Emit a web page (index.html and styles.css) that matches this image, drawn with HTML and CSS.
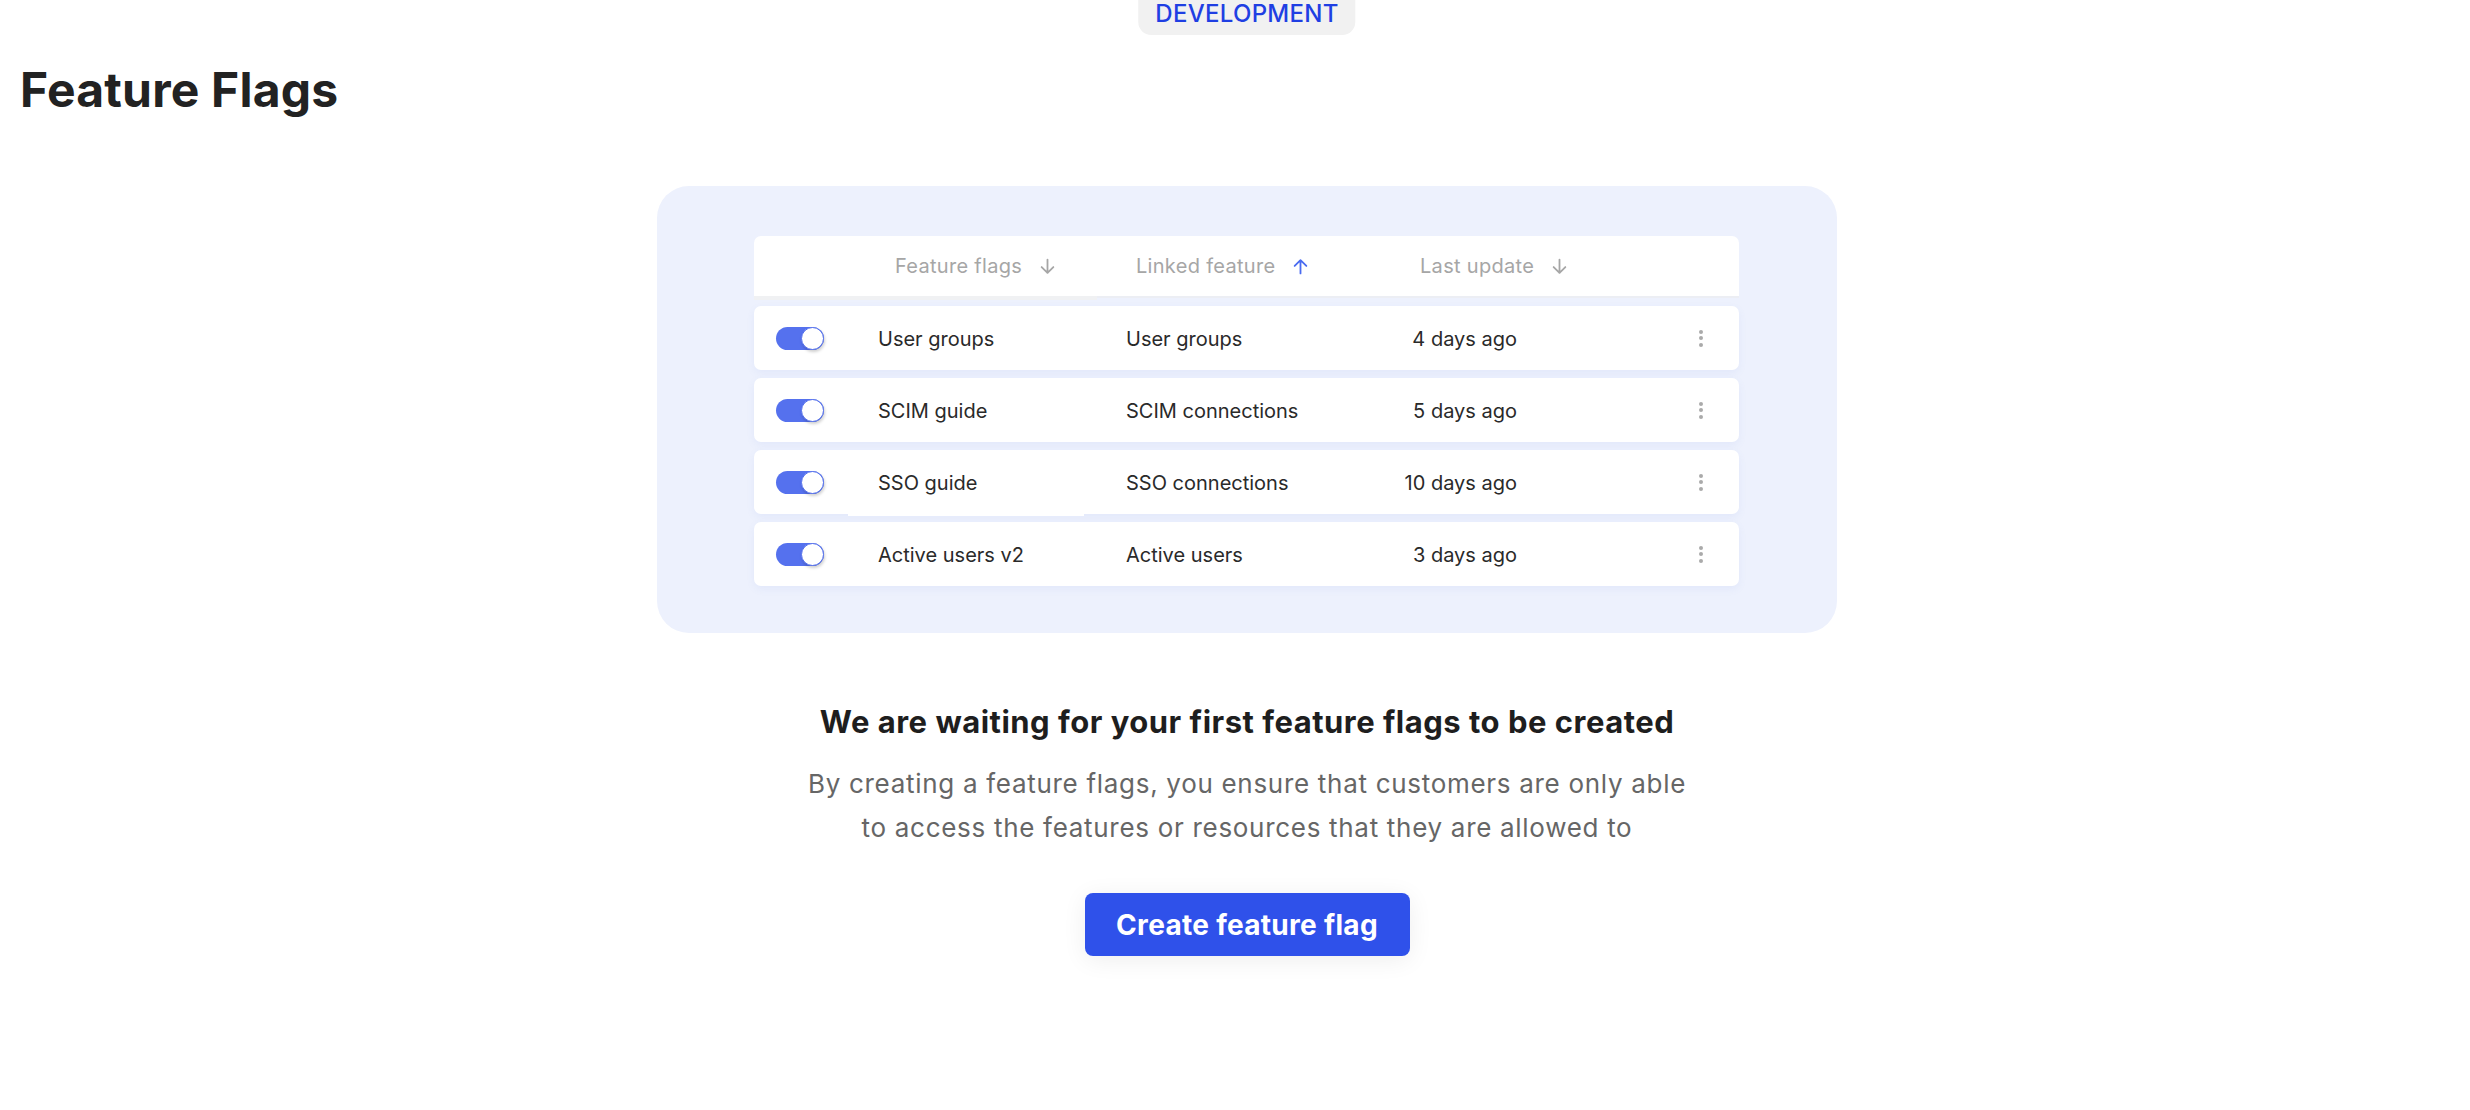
FILE: index.html
```html
<!DOCTYPE html>
<html lang="en">
<head>
<meta charset="utf-8">
<title>Feature Flags</title>
<link rel="stylesheet" href="styles.css">
</head>
<body>
<div class="page">
  <div class="env-badge">DEVELOPMENT</div>
  <h1 class="page-title">Feature Flags</h1>

  <main class="empty-state">
    <div class="illustration">
      <div class="flags-table">
        <div class="table-head">
          <div class="head-cell">Feature flags
            <svg class="sort-icon" viewBox="0 0 16 16"><path d="M8 1.5v12.5M2.5 8.5 8 14l5.5-5.5"/></svg>
          </div>
          <div class="head-cell">Linked feature
            <svg class="sort-icon sort-active" viewBox="0 0 16 16"><path d="M8 14.5V2M2.5 7.5 8 2l5.5 5.5"/></svg>
          </div>
          <div class="head-cell">Last update
            <svg class="sort-icon" viewBox="0 0 16 16"><path d="M8 1.5v12.5M2.5 8.5 8 14l5.5-5.5"/></svg>
          </div>
        </div>

        <div class="table-row">
          <span class="toggle"><span class="knob"></span></span>
          <span class="cell">User groups</span>
          <span class="cell">User groups</span>
          <span class="cell cell-date">4 days ago</span>
          <span class="kebab"><i></i><i></i><i></i></span>
        </div>
        <div class="table-row">
          <span class="toggle"><span class="knob"></span></span>
          <span class="cell">SCIM guide</span>
          <span class="cell">SCIM connections</span>
          <span class="cell cell-date">5 days ago</span>
          <span class="kebab"><i></i><i></i><i></i></span>
        </div>
        <div class="table-row row-sso">
          <span class="toggle"><span class="knob"></span></span>
          <span class="cell">SSO guide</span>
          <span class="cell">SSO connections</span>
          <span class="cell cell-date">10 days ago</span>
          <span class="kebab"><i></i><i></i><i></i></span>
        </div>
        <div class="table-row">
          <span class="toggle"><span class="knob"></span></span>
          <span class="cell">Active users v2</span>
          <span class="cell">Active users</span>
          <span class="cell cell-date">3 days ago</span>
          <span class="kebab"><i></i><i></i><i></i></span>
        </div>
      </div>
    </div>

    <h2 class="empty-title">We are waiting for your first feature flags to be created</h2>
    <p class="empty-text">By creating a feature flags, you ensure that customers are only able<br>to access the features or resources that they are allowed to</p>
    <button class="primary-btn" type="button">Create feature flag</button>
  </main>
</div>
</body>
</html>
```

FILE: styles.css
```css
* {
  box-sizing: border-box;
}

html, body {
  margin: 0;
  padding: 0;
  background: #ffffff;
}

body {
  font-family: Inter, "Noto Sans", "Liberation Sans", sans-serif;
  color: #222222;
}

.page {
  position: relative;
  min-height: 1110px;
  padding-left: 24px;
}

.env-badge {
  position: absolute;
  top: 0;
  left: calc(50% + 12px);
  transform: translateX(-50%);
  height: 35px;
  padding: 0 17px 7px;
  display: flex;
  align-items: center;
  background: #f1f1f1;
  color: #1f3fe3;
  font-size: 24px;
  font-weight: 500;
  letter-spacing: 0.3px;
  line-height: 1;
  border-radius: 0 0 13px 13px;
}

.page-title {
  margin: 0;
  padding-top: 61px;
  margin-left: -4px;
  font-size: 48px;
  line-height: 58px;
  font-weight: 700;
  color: #222222;
  letter-spacing: 0.2px;
}

.empty-state {
  display: flex;
  flex-direction: column;
  align-items: center;
  padding-top: 67px;
}

.illustration {
  width: 1180px;
  padding: 50px 98px 47px 97px;
  background: #edf1fd;
  border-radius: 32px;
}

.flags-table {
  display: flex;
  flex-direction: column;
  gap: 8px;
}

.table-head {
  position: relative;
  height: 60px;
  display: grid;
  grid-template-columns: 241px 284px 1fr;
  align-items: center;
  padding-left: 141px;
  background: #ffffff;
  border-radius: 7px 7px 0 0;
  box-shadow: 0 2px 0 #eceef4;
  margin-bottom: 2px;
}

.table-head::after {
  content: "";
  position: absolute;
  left: 0;
  bottom: -4px;
  width: 343px;
  height: 4px;
  background: #f0f1f3;
}

.head-cell {
  display: flex;
  align-items: center;
  gap: 17px;
  font-size: 20px;
  letter-spacing: 0.3px;
  color: #a6a6a6;
}

.sort-icon {
  width: 17px;
  height: 17px;
  fill: none;
  stroke: #a6a6a6;
  stroke-width: 1.7;
  stroke-linecap: round;
  stroke-linejoin: round;
}

.sort-icon.sort-active {
  stroke: #4a6bf0;
}

.table-row {
  position: relative;
  height: 64px;
  display: grid;
  grid-template-columns: 102px 248px 265px 126px 1fr;
  align-items: center;
  padding-left: 22px;
  padding-right: 36px;
  background: #ffffff;
  border-radius: 7px;
  box-shadow: 0 3px 8px rgba(90, 110, 210, 0.07);
}

.row-sso::after {
  content: "";
  position: absolute;
  left: 94px;
  bottom: -2px;
  width: 236px;
  height: 2px;
  background: #ffffff;
}

.cell {
  font-size: 20px;
  color: #2a2a2a;
  white-space: nowrap;
  padding-top: 2px;
}

.cell-date {
  text-align: right;
}

.toggle {
  position: relative;
  width: 48px;
  height: 23px;
  border-radius: 12px;
  background: #5571ee;
}

.knob {
  position: absolute;
  top: 0;
  right: 0;
  width: 23px;
  height: 23px;
  border-radius: 50%;
  background: #ffffff;
  border: 1.5px solid #5571ee;
  box-shadow: 1px 2px 3px rgba(0, 0, 0, 0.18);
}

.kebab {
  justify-self: end;
  display: flex;
  flex-direction: column;
  gap: 2.5px;
}

.kebab i {
  display: block;
  width: 4px;
  height: 4px;
  border-radius: 50%;
  background: #aaaaaa;
}

.empty-title {
  margin: 71px 0 0;
  font-size: 31px;
  line-height: 36px;
  font-weight: 700;
  letter-spacing: 0.5px;
  color: #1e1e1e;
  text-align: center;
}

.empty-text {
  margin: 22px 0 0;
  font-size: 26px;
  line-height: 44px;
  letter-spacing: 0.7px;
  color: #666666;
  text-align: center;
}

.primary-btn {
  margin-top: 43px;
  width: 325px;
  height: 63px;
  border: none;
  border-radius: 8px;
  background: #2f51ea;
  color: #ffffff;
  font-family: Inter, "Noto Sans", "Liberation Sans", sans-serif;
  font-size: 28px;
  font-weight: 700;
  letter-spacing: 0.3px;
  box-shadow: 0 4px 24px rgba(0, 0, 0, 0.07);
  cursor: pointer;
}
```
